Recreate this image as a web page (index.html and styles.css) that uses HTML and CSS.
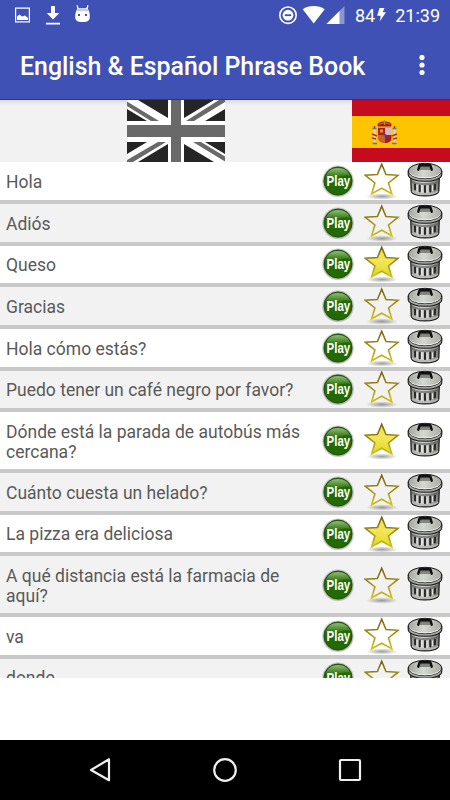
FILE: index.html
```html
<!DOCTYPE html>
<html lang="es">
<head>
<meta charset="utf-8">
<title>English &amp; Español Phrase Book</title>
<link rel="stylesheet" href="styles.css">
</head>
<body>
<svg class="defs" aria-hidden="true">
  <defs>
    <linearGradient id="line" x1="0" y1="0" x2="0" y2="1"><stop offset="0" stop-color="#766510"/><stop offset=".5" stop-color="#a08c16"/><stop offset="1" stop-color="#d0c418"/></linearGradient>
    <linearGradient id="gold" x1="0" y1="0" x2="0" y2="1"><stop offset="0" stop-color="#ecdf50"/><stop offset=".45" stop-color="#f3e658"/><stop offset="1" stop-color="#e2d626"/></linearGradient>
    <radialGradient id="shade"><stop offset="0" stop-color="#000" stop-opacity=".38"/><stop offset="1" stop-color="#000" stop-opacity="0"/></radialGradient>
    <radialGradient id="halo"><stop offset=".82" stop-color="#000" stop-opacity=".5"/><stop offset="1" stop-color="#000" stop-opacity="0"/></radialGradient>
    <linearGradient id="shine" x1="0" y1="0" x2="0" y2="1"><stop offset="0" stop-color="#8fbd78"/><stop offset="1" stop-color="#2b7008"/></linearGradient>
    <linearGradient id="can" x1="0" y1="0" x2="1" y2="0"><stop offset="0" stop-color="#888a85"/><stop offset=".3" stop-color="#dcddda"/><stop offset=".65" stop-color="#bcbdb9"/><stop offset="1" stop-color="#73756f"/></linearGradient>
    <linearGradient id="lid" x1="0" y1="0" x2="1" y2="0"><stop offset="0" stop-color="#a2a49d"/><stop offset=".45" stop-color="#d6d8d2"/><stop offset="1" stop-color="#a8aaa3"/></linearGradient>
    <symbol id="play" viewBox="0 0 34 34">
      <circle cx="17" cy="17.3" r="16.4" fill="url(#halo)"/>
      <circle cx="17" cy="17" r="14" fill="#246a03" stroke="#174d03" stroke-width=".8"/>
      <path d="M5 13C6 7 11 4 17 4s11 3 12 8c-5-3-12 3-24 1z" fill="url(#shine)"/>
    </symbol>
    <symbol id="star" viewBox="0 0 36 38">
      <ellipse cx="18" cy="34.5" rx="16" ry="3.2" fill="url(#shade)"/>
      <path d="M17.700 2.300l4.300 10.200 12 .8-9.500 7.700 3.300 10.800-10.100-5.600-10.100 5.600 3.300-10.800L1.400 13.300l12-.8z" stroke="url(#line)" stroke-width="1.600"/>
    </symbol>
    <symbol id="trash" viewBox="0 0 36 36">
      <path d="M3.600 12l.6 17C5 35.600 31 35.600 31.800 29l.6-17z" fill="url(#can)" stroke="#161616" stroke-width="1.200"/>
      <path d="M5 29c3 4 23 4 26 0" fill="none" stroke="#b5b6b2" stroke-width="1.300"/>
      <path d="M8 22.500l.2 5M12.700 23.500v6M18 24v6M23.300 23.500v6M28 22.500l-.2 5" stroke="#2a2a2a" stroke-width="2.200" stroke-linecap="round"/>
      <path d="M10 22.500v6M14.900 23.500v6.500M20.100 24v6.500M25.400 23.500v5.500" stroke="#efefed" stroke-width=".9"/>
      <path d="M3.800 18c5 4 23 4 28.400 0v2.500c-6 3.500-22 3.500-28.400 0z" fill="#555" opacity=".6"/>
      <path d="M1.200 9.300v3.200c0 4 7.800 6.800 16.800 6.800s16.800-2.800 16.800-6.800V9.300z" fill="#a6a8a2" stroke="#161616" stroke-width="1.100"/>
      <ellipse cx="18" cy="9" rx="16.800" ry="7.700" fill="url(#lid)" stroke="#161616" stroke-width="1"/>
      <path d="M2.500 10.800c4 6.800 27 6.800 31 0" fill="none" stroke="#f1f2ef" stroke-width="1"/>
      <path d="M11.300 7.600l1.400-4.400h10.600l1.400 4.400" fill="#777974" stroke="#111" stroke-width="2.500" stroke-linejoin="round" stroke-linecap="round"/>
      <path d="M13.300 5.500h9.400l.7 2.500H12.600z" fill="#85877f"/>
    </symbol>
  </defs>
</svg>
<div class="screen">
  <header class="top">
    <div class="status">
      <svg class="status-left" viewBox="0 0 100 32" width="100" height="32" fill="#fff">
        <path fill-rule="evenodd" d="M15 7.500h15v15H15zm1.200 1.200v12.600h12.600V8.700z"/>
        <path d="M17 20v-3.500l2.500-2 2.500 2 3-1 3 2.500V20z"/>
        <path d="M51 6h4v7h4.300L53 19.500 46.700 13H51zM46 22.800h14v1.700H46z"/>
        <path fill-rule="evenodd" d="M77.500 5l1.200 3.200h7.600L87.500 5l1 .3-.7 4c1.700 1.500 2.200 5 2 8-.3 3.500-2.300 4.700-7.300 4.700s-7-1.200-7.300-4.700c-.2-3 .6-6.500 2.300-8l-1-4zM78 14v2h2v-2zm7 0v2h2v-2z"/>
        <path d="M77 9h11l1 2.200H76z" fill="#c5cae9"/>
      </svg>
      <div class="status-right">
        <svg viewBox="0 0 66 32" width="66" height="32" fill="#fff">
          <circle cx="9" cy="15.200" r="8.200" fill="none" stroke="#fff" stroke-width="1.600"/>
          <circle cx="9" cy="15.200" r="5.400"/>
          <path d="M5.800 14.300H12.200v1.800H5.800z" fill="#3f51b5"/>
          <path d="M23.700 9.300c6-4.300 16-4.300 22 0L34.700 23.500z"/>
          <path d="M65.500 6v18h-18z" opacity=".4"/><path d="M60.500 11v13h-13z"/>
        </svg>
        <span class="battery">84</span>
        <svg class="bolt" viewBox="0 0 9 14" width="9" height="14" fill="#fff"><path d="M2.500 0h5L5.700 4.300H9L2.600 13.500l1.200-5.700H.2z"/></svg>
        <span class="clock">21:39</span>
      </div>
    </div>
    <div class="bar">
      <h1>English &amp; Español Phrase Book</h1>
      <svg viewBox="0 0 6 20" width="6" height="20" fill="#fff"><circle cx="3" cy="2.500" r="2.600"/><circle cx="3" cy="10" r="2.600"/><circle cx="3" cy="17.500" r="2.600"/></svg>
    </div>
  </header>
  <div class="flags">
    <svg viewBox="0 0 98 62" width="98" height="62">
      <path d="M0 0h98v62H0z" fill="#fff"/>
      <path d="M11 0h30v18zM0 9v12h20zM57 0h30L57 18zM98 9v12H78zM0 42h20L0 54zM11 62h30V44zM57 44v18h30zM78 42h20v12z" fill="#252525"/>
      <path d="M0 1.500L32 21h-8L0 6zM98 0v2L67 21h-8L92 0zM0 62v-2l31-18h8L6 62zM66 42h8l24 14.500v5z" fill="#696969"/>
      <path d="M44 0h10v62H44zM0 25h98v12H0z" fill="#696969"/>
    </svg>
    <svg viewBox="0 0 98 62" width="98" height="62">
      <path d="M0 0h98v62H0z" fill="#c60b1e"/><path d="M0 16h98v32H0z" fill="#ffc400"/>
      <path d="M26 26.500c-2-4 3-5 6.500-5s8.500 1 6.500 5z" fill="#ad1519"/>
      <path d="M27 24.500c2-2 9-2 11 0M32.500 20v5M26 27h13" fill="none" stroke="#b78b3b" stroke-width="1"/>
      <path d="M26 28h7v7h-7zM33 35h6v6h-3z" fill="#b51c20"/>
      <path d="M33 28h6.500v7H33z" fill="#dcb7c0"/><path d="M26 35h7v8c-4 0-7-2-7-5z" fill="#c8632a"/>
      <path d="M33 35h6.500v3c0 3-3 5-6.500 5z" fill="#a91b25"/>
      <path d="M28 29.500h3v3h-3z" fill="#d99a2d"/><circle cx="32.800" cy="35" r="1.500" fill="#305baa"/>
      <path d="M22.500 29v14M42.500 29v14" stroke="#d6d2cc" stroke-width="2.200"/>
      <path d="M20.500 28.500h4M40.500 28.500h4M20.500 43.500h4.500M40 43.500h4.500" stroke="#577a9b" stroke-width="1.500"/>
      <path d="M20 34l5 2M20 38l4 1M45 34l-5 2M45 38l-4 1M22.500 26v2M42.500 26v2" stroke="#b52c27" stroke-width="1.400"/>
    </svg>
  </div>
  <main class="list" id="list"></main>
  <nav class="nav">
    <svg viewBox="0 0 24 26" width="24" height="26"><path d="M21 2.300v21L3 13z"/></svg>
    <svg viewBox="0 0 24 26" width="24" height="26"><circle cx="12" cy="13" r="10.800"/></svg>
    <svg viewBox="0 0 24 26" width="24" height="26"><rect x="2" y="3" width="20" height="20" rx="1"/></svg>
  </nav>
</div>
<script src="app.js"></script>
</body>
</html>
```
FILE: styles.css
```css
* { box-sizing: border-box; }
body { margin: 0; background: #fff; font-family: Roboto, "Liberation Sans", sans-serif; }
.defs { position: absolute; width: 0; height: 0; }
.screen { display: flex; flex-direction: column; width: 450px; height: 800px; overflow: hidden; }
.top { flex: none; height: 100px; background: #3f51b5; color: #fff; border-bottom: 1px solid #1c35a2; }
.status { display: flex; justify-content: space-between; height: 32px; }
.status-right { display: flex; align-items: center; padding-right: 10px; font-size: 18px; }
.status-right span { line-height: 20px; }
.status-right .battery { margin-left: 10px; }
.bolt { margin: 0 9px 2px 2px; }
.bar { display: flex; align-items: center; justify-content: space-between; height: 67px; padding: 0 25px 0 20px; }
.bar h1 { margin: 0; padding-top: 2px; font-size: 24.900px; font-weight: 500; line-height: 30px; white-space: nowrap; }
.bar svg { margin-bottom: 1px; }
.flags { display: flex; flex: none; justify-content: space-between; height: 62.300px; padding-left: 127px; background: linear-gradient(#d9d9d9, #f2f2f2 5px); }
.flags svg { display: block; }
.list { flex: none; height: 515.500px; overflow: hidden; }
.row { display: flex; align-items: center; height: 41.670px; padding-right: 7px; border-bottom: 4px solid #c9c9c9; color: #595959; }
.row:nth-child(even) { background: #f2f2f2; }
.row.tall { height: 60.800px; }
.phrase { flex: 1; padding: 2px 6px 0; font-size: 17.520px; line-height: 20.500px; }
.tall .phrase { padding-top: 3px; }
.play { display: grid; place-items: center; width: 34px; height: 34px; margin-right: 9px; }
.play > * { grid-area: 1 / 1; }
.play span { color: #fff; font: bold 14px/16px "Liberation Sans", sans-serif; z-index: 1; transform: scaleX(.82); }
.star { width: 36px; height: 38px; margin-right: 7px; fill: none; }
.star.on { fill: url(#gold); }
.trash { width: 36px; height: 36px; margin-bottom: 2px; }
.play, .star, .trash { flex: none; }
.nav { display: flex; align-items: center; justify-content: space-between; height: 60px; margin-top: auto; padding: 0 88px; background: #000; }
.nav svg { fill: none; stroke: #eee; stroke-width: 2.200; stroke-linejoin: round; }
```
FILE: app.js
```js
const phrases = [
  ["Hola"], ["Adiós"], ["Queso", true], ["Gracias"], ["Hola cómo estás?"],
  ["Puedo tener un café negro por favor?"],
  ["Dónde está la parada de autobús más<br>cercana?", true, true],
  ["Cuánto cuesta un helado?"], ["La pizza era deliciosa", true],
  ["A qué distancia está la farmacia de<br>aquí?", false, true],
  ["va"], ["donde"]
];
document.getElementById("list").innerHTML = phrases.map(([text, starred, tall]) => `
  <div class="row${tall ? " tall" : ""}">
    <div class="phrase">${text}</div>
    <div class="play"><svg width="34" height="34"><use href="#play"/></svg><span>Play</span></div>
    <svg class="star${starred ? " on" : ""}"><use href="#star"/></svg>
    <svg class="trash"><use href="#trash"/></svg>
  </div>`).join("");
```
